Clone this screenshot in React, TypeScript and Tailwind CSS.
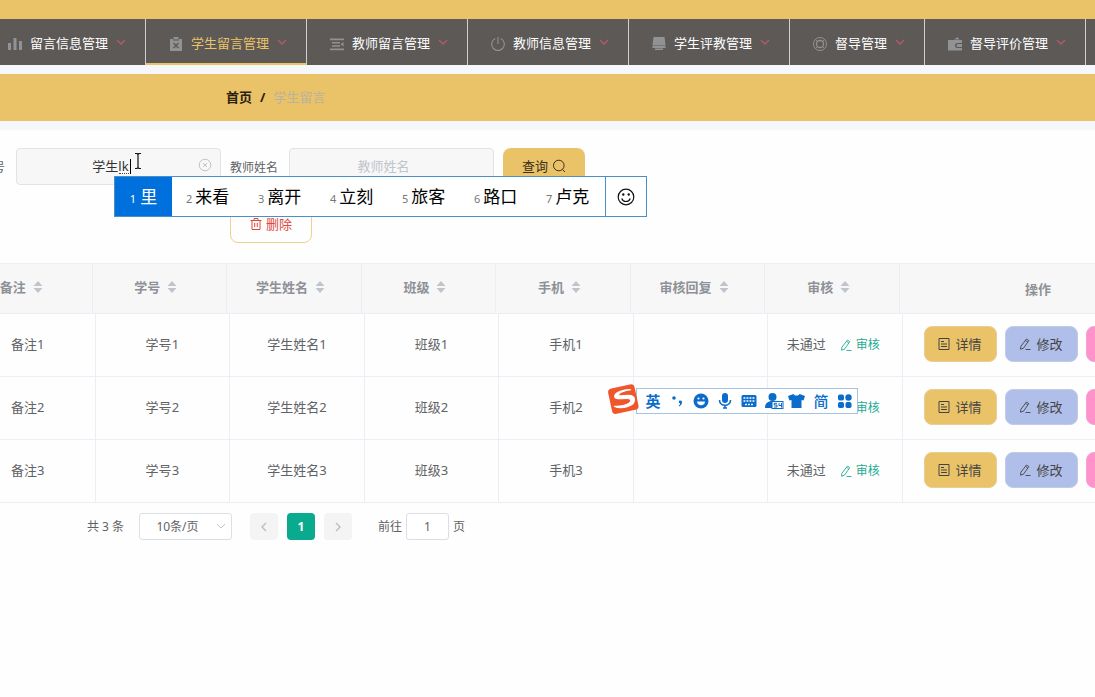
import type { ReactNode } from "react";
import { clsx } from "clsx";

type MenuItem = {
  label: string;
  icon: ReactNode;
  active?: boolean;
};

const MENU: MenuItem[] = [
  {
    label: "留言信息管理",
    icon: <path d="M0 6h3v7H0zM5.500 1h3v12h-3zM11 4h3v9h-3z" />,
  },
  {
    label: "学生留言管理",
    active: true,
    icon: (
      <>
        <path d="M1 2h3v1.500h6V2h3v12H1z" />
        <path d="M4.500 0h5v2.500h-5z" />
        <path d="M4.500 6l5 5M9.500 6l-5 5" stroke="#5c5957" strokeWidth="1.400" />
      </>
    ),
  },
  {
    label: "教师留言管理",
    icon: <path d="M0 1.500h14v1.800H0zM2 5h8v1.500H2zM2 8.200h8v1.500H2zM0 11.500h14v1.800H0zM13.500 5v4.500L10.500 7.300z" />,
  },
  {
    label: "教师信息管理",
    icon: (
      <path
        d="M4.200 1.600a6.300 6.300 0 1 0 5.600 0M7 0v7"
        fill="none"
        stroke="currentColor"
        strokeWidth="1.100"
      />
    ),
  },
  {
    label: "学生评教管理",
    icon: <path d="M1.500 0h11l1 8H.5zM.5 8.500h13V11H.5zM3 11.500h8V13H3z" />,
  },
  {
    label: "督导管理",
    icon: (
      <g fill="none" stroke="currentColor">
        <circle cx="7" cy="7" r="6.500" />
        <circle cx="7" cy="7" r="3.500" strokeWidth="1.300" />
        <path d="M2.400 2.400l2.100 2.100M11.600 2.400L9.500 4.500M2.400 11.600l2.100-2.100M11.600 11.600L9.500 9.500" />
      </g>
    ),
  },
  {
    label: "督导评价管理",
    icon: (
      <>
        <path d="M0 3h14v3H9.500a2 2 0 0 0 0 5H14v2.500H0z" />
        <path d="M6 2.500L9.500 0l2 2.500zM10 7h4v3h-4a1.500 1.500 0 0 1 0-3z" />
      </>
    ),
  },
];

const COLUMNS = ["备注", "学号", "学生姓名", "班级", "手机", "审核回复", "审核"];
const ROWS = [1, 2, 3];
const CANDIDATES = ["来看", "离开", "立刻", "旅客", "路口", "卢克"];

export default function App() {
  return (
    <div className="relative min-h-screen overflow-hidden bg-[#fefefe] font-['Noto_Sans','Noto_Sans_CJK_SC',sans-serif] text-[13px] leading-5 text-[#606266]">
      <div className="h-[19px] bg-[#eac369]" />
      <TopMenu />
      <div className="border-y-[9px] border-[#f5f7fa] bg-[#eac369]">
        <nav className="flex h-[47px] items-center gap-2 pb-0.5 pl-[226px] font-bold text-[#2b2110]">
          <a href="#home">首页</a>
          <span>/</span>
          <span className="font-normal text-[#b9b29c]">学生留言</span>
        </nav>
      </div>
      <SearchForm />
      <DataTable />
      <Pagination />
      <InputToolbar />
    </div>
  );
}

function TopMenu() {
  return (
    <nav className="-ml-[15px] flex h-[46px] overflow-hidden bg-[#5c5957] text-white">
      {MENU.map((item) => (
        <a
          key={item.label}
          href="#menu"
          className={clsx(
            "flex shrink-0 items-center gap-2 border-r border-r-[#cfcfcf] pr-[19px] pl-[23px]",
            item.active && "text-[#eac369] shadow-[inset_0_-2px_0_#eac369]"
          )}
        >
          <svg viewBox="0 0 14 14" className="mt-1 size-[14px] text-[#919294]" fill="currentColor">
            {item.icon}
          </svg>
          <span className="pt-0.5">{item.label}</span>
          <svg viewBox="0 0 10 10" className="size-[10px]" fill="none" stroke="#b5596b" strokeWidth="1.300">
            <path d="M1 3l4 4 4-4" />
          </svg>
        </a>
      ))}
    </nav>
  );
}

function SearchForm() {
  return (
    <form className="pt-[18px] pb-5">
      <div className="-ml-[7px] flex items-center">
        <label htmlFor="sno" className="pt-0.5 pr-[11px] text-xs">号</label>
        <div className="relative mr-[9px]">
          <input
            id="sno"
            defaultValue="学生lk"
            className="h-[37px] w-[205px] rounded border border-[#e2e3e5] bg-[#f7f7f7] pr-7 pb-0.5 pl-3 text-center text-[#333] outline-none"
          />
          <span className="absolute top-[25px] left-[103px] w-3 border-b border-dotted border-[#444]" />
          <span className="absolute top-[11px] left-[114px] h-[15px] w-px bg-black" />
          <svg viewBox="0 0 14 14" className="absolute top-[10px] left-[182px] size-[14px]" fill="none" stroke="#c0c4cc">
            <circle cx="7" cy="7" r="5.800" />
            <path d="M5 5l4 4M9 5L5 9" />
          </svg>
          <svg viewBox="0 0 8 16" className="absolute top-[5px] left-[118px] z-20 h-4 w-2" fill="none" stroke="#111" strokeWidth="1.200">
            <path d="M1 .5h2l1 1 1-1h2M4 1.500v13M1 15.500h2l1-1 1 1h2" />
          </svg>
          <CandidateBar />
        </div>
        <label htmlFor="teacher" className="pt-0.5 pr-[11px] text-xs">教师姓名</label>
        <input
          id="teacher"
          placeholder="教师姓名"
          className="mr-[9px] h-[37px] w-[205px] rounded border border-[#e2e3e5] bg-[#f7f7f7] pr-7 pb-0.5 pl-3 text-center outline-none placeholder:text-[#c0c4cc]"
        />
        <button type="button" className="flex h-[37px] w-[82px] items-center justify-center gap-1 rounded-lg bg-[#eac369] pb-0.5 text-[#3a2f18]">
          查询
          <svg viewBox="0 0 14 14" className="size-[14px]" fill="none" stroke="currentColor">
            <circle cx="6.800" cy="6.500" r="5.300" />
            <path d="M10.500 10.500l2.500 2.500" />
          </svg>
        </button>
      </div>
      <button
        type="button"
        className="mt-[21px] ml-[230px] flex h-[37px] w-[82px] items-center justify-center gap-1 rounded-lg border border-[#ecd28f] pb-0.5 text-[#e0483e]"
      >
        <svg viewBox="0 0 12 12" className="size-3" fill="none" stroke="currentColor">
          <path d="M.5 2.500h11M4 2.500v-2h4v2M2 2.500v9h8v-9M4.700 5v4M7.300 5v4" />
        </svg>
        删除
      </button>
    </form>
  );
}

function CandidateBar() {
  return (
    <div className="absolute top-7 left-[98px] z-10 flex h-[41px] w-[533px] border border-[#4a90c8] bg-white text-[17px] text-black">
      <div className="flex w-[57px] shrink-0 items-center justify-center gap-1 bg-[#0071dc] text-white">
        <span className="pt-1 text-[11px]">1</span>里
      </div>
      {CANDIDATES.map((word, i) => (
        <div key={word} className="flex w-[72px] shrink-0 items-center gap-[3px] pl-[14px]">
          <span className="pt-1 text-[11px] text-[#777]">{i + 2}</span>
          {word}
        </div>
      ))}
      <div className="ml-auto flex w-[41px] items-center justify-center border-l border-[#4a90c8]">
        <svg viewBox="0 0 18 18" className="size-[18px]" fill="none" stroke="#111" strokeWidth="1.200">
          <circle cx="9" cy="9" r="7.800" />
          <path d="M4.800 10.500c1.200 4 7.200 4 8.400 0" />
          <circle cx="6.300" cy="6.500" r=".6" fill="#111" />
          <circle cx="11.700" cy="6.500" r=".6" fill="#111" />
        </svg>
      </div>
    </div>
  );
}

function PenIcon() {
  return (
    <svg viewBox="0 0 12 12" className="size-3" fill="none" stroke="currentColor" strokeWidth="0.900">
      <path d="M7.500 1l2.300 1.600-5.300 7.600-3 1 .4-3zM6.600 2.400l2.200 1.600M6.500 11.500h5" />
    </svg>
  );
}

function DataTable() {
  return (
    <>
      <div className="-mr-[81px] -ml-[42px]">
        <table className="w-full table-fixed border-separate border-spacing-0">
          <thead className="bg-[#f7f7f7] text-[#8e9196]">
            <tr className="h-[51px]">
              {COLUMNS.map((name) => (
                <th key={name} className="border-y border-r border-[#ebeef5] p-0 pb-1">
                  <span className="flex items-center justify-center">
                    {name}
                    <svg viewBox="0 0 24 14" className="h-[14px] w-6" fill="#c0c4cc">
                      <path d="M12 1l4.500 5h-9zM12 13l4.500-5h-9z" />
                    </svg>
                  </span>
                </th>
              ))}
              <th className="w-[276px] border-y border-[#ebeef5] p-0">操作</th>
            </tr>
          </thead>
        </table>
      </div>
      <div className="-mr-[84px] -ml-[39px]">
        <table className="w-full table-fixed border-separate border-spacing-0">
          <tbody>
            {ROWS.map((n) => (
              <tr key={n} className="h-[63px] text-center *:border-b *:border-[#ebeef5] *:p-0 *:pb-0.5">
                <td className="border-r">备注{n}</td>
                <td className="border-r">学号{n}</td>
                <td className="border-r">学生姓名{n}</td>
                <td className="border-r">班级{n}</td>
                <td className="border-r">手机{n}</td>
                <td className="border-r" />
                <td className="border-r">
                  <div className="flex items-center justify-center gap-[14px] pr-1">
                    未通过
                    <button type="button" className="flex items-center gap-1 pt-0.5 text-xs text-[#1fab91]">
                      <PenIcon />
                      审核
                    </button>
                  </div>
                </td>
                <td className="w-[276px]">
                  <div className="flex justify-center gap-2 text-[#444]">
                    <button type="button" className="flex h-9 w-[73px] items-center justify-center gap-[5px] rounded-lg border border-[#e5cf96] bg-[#eac369]">
                      <svg viewBox="0 0 12 12" className="size-3" fill="none" stroke="currentColor">
                        <path d="M1 .5h10v11H1zM3 3.500h3M3 6h6M3 8.500h6" />
                      </svg>
                      详情
                    </button>
                    <button type="button" className="flex h-9 w-[73px] items-center justify-center gap-[5px] rounded-lg border border-[#c3cbe4] bg-[#b0bfea]">
                      <PenIcon />
                      修改
                    </button>
                    <button type="button" aria-label="删除" className="h-9 w-[73px] rounded-lg border border-[#f3a5ce] bg-[#ff91cb]" />
                  </div>
                </td>
              </tr>
            ))}
          </tbody>
        </table>
      </div>
    </>
  );
}

function Pagination() {
  return (
    <div className="flex items-center pt-[10px] pl-[87px] text-xs">
      <span className="w-[52px]">共 3 条</span>
      <div className="relative mr-[18px]">
        <select
          aria-label="每页条数"
          className="h-[27px] w-[93px] appearance-none rounded-[3px] border border-[#dcdfe6] bg-white pr-4 text-center [text-align-last:center]"
        >
          <option>10条/页</option>
        </select>
        <svg viewBox="0 0 10 10" className="pointer-events-none absolute top-2 right-[6px] size-[10px]" fill="none" stroke="#c0c4cc">
          <path d="M1 3l4 4 4-4" />
        </svg>
      </div>
      <div className="flex gap-[9px]">
        <button type="button" aria-label="上一页" className="flex h-[27px] w-7 items-center justify-center rounded-sm bg-[#f4f4f5]">
          <svg viewBox="0 0 10 10" className="size-[10px]" fill="none" stroke="#b8bbc2" strokeWidth="1.300">
            <path d="M7 1L3 5l4 4" />
          </svg>
        </button>
        <button type="button" className="h-[27px] w-7 rounded-sm bg-[#09aa8e] font-bold text-white">1</button>
        <button type="button" aria-label="下一页" className="flex h-[27px] w-7 items-center justify-center rounded-sm bg-[#f4f4f5]">
          <svg viewBox="0 0 10 10" className="size-[10px]" fill="none" stroke="#b8bbc2" strokeWidth="1.300">
            <path d="M3 1l4 4-4 4" />
          </svg>
        </button>
      </div>
      <label className="ml-[26px] flex items-center gap-1">
        前往
        <input defaultValue="1" className="h-[27px] w-[43px] rounded-[3px] border border-[#dcdfe6] bg-white text-center" />
        页
      </label>
    </div>
  );
}

function InputToolbar() {
  return (
    <div className="absolute top-[384px] left-[608px] z-10 h-8 w-[250px] text-[#0b6ccc]">
      <div className="mt-1 ml-7 flex h-[26px] items-center border border-[#a5c4e4] bg-white pl-1 *:w-6 *:shrink-0">
        <span className="text-center text-[15px] font-bold">英</span>
        <svg viewBox="0 0 24 16" className="h-4" fill="currentColor">
          <circle cx="9" cy="5" r="1.800" />
          <path d="M14.500 7.500c3-.8 4 3.200-.3 6l-.5-.7c1.300-1.200 1.500-2 1.300-2.500-1.300 0-1.700-2.200-.5-2.800z" />
        </svg>
        <svg viewBox="0 0 24 16" className="h-4" fill="currentColor">
          <circle cx="12" cy="8" r="7.500" />
          <path d="M8 8.500h8c0 5-8 5-8 0z" fill="#fff" />
          <circle cx="9.500" cy="5.500" r="1.100" fill="#fff" />
          <circle cx="14.500" cy="5.500" r="1.100" fill="#fff" />
        </svg>
        <svg viewBox="0 0 24 16" className="h-4" fill="currentColor">
          <rect x="9" y="0" width="6" height="10" rx="3" />
          <path d="M6.500 7c0 7 11 7 11 0M12 12v3.500M10 15h4" fill="none" stroke="currentColor" strokeWidth="1.600" />
        </svg>
        <svg viewBox="0 0 24 16" className="h-4" fill="currentColor">
          <rect x="4.500" y="2" width="15" height="12" rx="1.500" />
          <path d="M6.500 5h11M6.500 8h11M8 11.500h8" stroke="#fff" strokeWidth="1.700" strokeDasharray="1.900 1.100" />
        </svg>
        <svg viewBox="0 0 24 16" className="h-4" fill="currentColor">
          <circle cx="11.500" cy="4" r="4" />
          <path d="M4 15c0-5 3-7 7.500-7 3 0 5 1 6 2v5z" />
          <rect x="11" y="8.500" width="11" height="7" fill="#fff" stroke="currentColor" />
          <path d="M16 10.300h-2.800v1.700H16v2h-3M18 10v2.500h2.500M20.500 10v4.500" fill="none" stroke="currentColor" />
        </svg>
        <svg viewBox="0 0 24 16" className="h-4" fill="currentColor">
          <path d="M8.500 1c1 2 5 2 6 0l5.500 2-1.500 4.500-2-.5v8h-10V7l-2 .5L3 3z" />
        </svg>
        <span className="text-center text-[15px] font-medium">简</span>
        <svg viewBox="0 0 24 16" className="h-4" fill="currentColor">
          <rect x="5" y="1.500" width="6" height="6" rx="1.800" />
          <circle cx="15.500" cy="4.500" r="3.200" />
          <rect x="5" y="9" width="6" height="6" rx="1.800" />
          <rect x="12.500" y="9" width="6" height="6" rx="1.800" />
        </svg>
      </div>
      <svg viewBox="0 0 32 32" className="absolute top-0 left-0 size-8">
        <g transform="rotate(-12 16 16)">
          <rect x="2" y="2" width="27" height="26" rx="4" fill="#f0562b" />
          <path
            d="M25 7.500c-5-2-17.500-1.500-17.500 3.500 0 5 15 2 15 6.500 0 4-11.500 4.500-17.500 2.500 7 5.500 21.500 4 21.500-3 0-7-14.500-4-14.500-7.200C12 7.500 19 7 25 7.500z"
            fill="#fff"
            stroke="#fff"
          />
        </g>
      </svg>
    </div>
  );
}
